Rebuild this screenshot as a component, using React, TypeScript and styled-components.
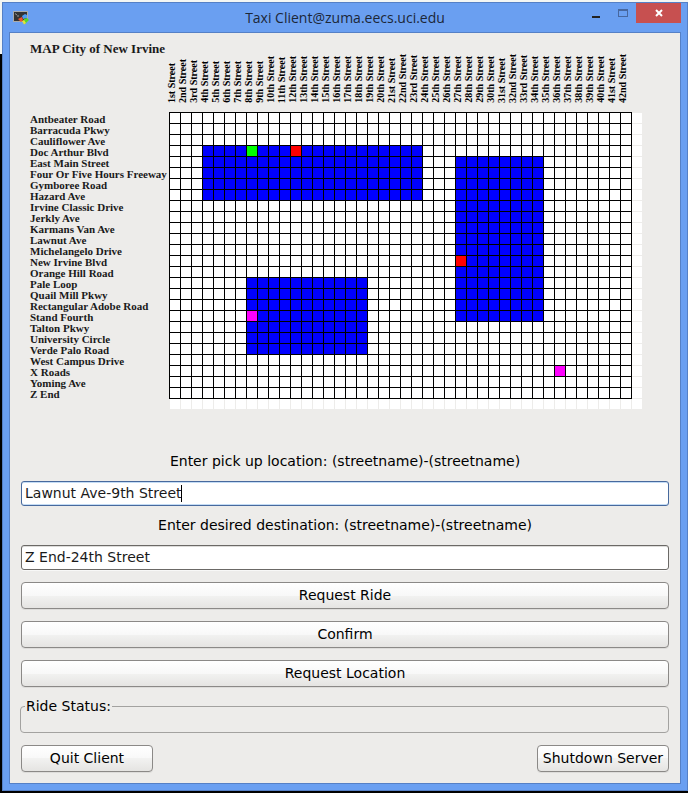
import React, { useLayoutEffect, useRef, useState } from "react";
import styled, { createGlobalStyle } from "styled-components";

const STREETS = [
  "Antbeater Road", "Barracuda Pkwy", "Cauliflower Ave", "Doc Arthur Blvd",
  "East Main Street", "Four Or Five Hours Freeway", "Gymboree Road", "Hazard Ave",
  "Irvine Classic Drive", "Jerkly Ave", "Karmans Van Ave", "Lawnut Ave",
  "Michelangelo Drive", "New Irvine Blvd", "Orange Hill Road", "Pale Loop",
  "Quail Mill Pkwy", "Rectangular Adobe Road", "Stand Fourth", "Talton Pkwy",
  "University Circle", "Verde Palo Road", "West Campus Drive", "X Roads",
  "Yoming Ave", "Z End",
];

const ordinal = (n: number) => {
  const teen = n > 10 && n < 14;
  const suffix = teen ? "th" : ["th", "st", "nd", "rd"][n % 10] ?? "th";
  return `${n}${suffix}`;
};

const CROSS_STREETS = Array.from({ length: 42 }, (_, i) => `${ordinal(i + 1)} Street`);

const CELL = 11;
const COLS = CROSS_STREETS.length;
const ROWS = STREETS.length;

type Block = { col: number; row: number; cols: number; rows: number };
type Marker = { col: number; row: number; color: string };

const BLOCKS: Block[] = [
  { col: 3, row: 3, cols: 20, rows: 5 },
  { col: 26, row: 4, cols: 8, rows: 15 },
  { col: 7, row: 15, cols: 11, rows: 7 },
];

const MARKERS: Marker[] = [
  { col: 7, row: 3, color: "#00ff00" },
  { col: 11, row: 3, color: "#ff0000" },
  { col: 26, row: 13, color: "#ff0000" },
  { col: 7, row: 18, color: "#ff00ff" },
  { col: 35, row: 23, color: "#ff00ff" },
];

const GlobalStyle = createGlobalStyle`
  * { box-sizing: border-box; }
  body { margin: 0; background: #000; }
  button, input { font: inherit; color: inherit; }
`;

const Desktop = styled.div`
  min-height: 100vh;
  display: flex;
  padding: 2px 0 2px 2px;
  background: linear-gradient(#f4f6f4 54px, #000 54px);
`;

const Window = styled.main`
  flex: 1;
  display: flex;
  flex-direction: column;
  padding: 0 6px 6px;
  border: 1px solid #5580c6;
  background: #6a9ff1;
`;

const TitleBar = styled.header`
  height: 29px;
  display: grid;
  grid-template-columns: 112px 1fr 112px;
  align-items: start;
`;

const AppIcon = styled.svg`
  width: 16px;
  height: 14px;
  margin: 8px 0 0 4px;
`;

const Title = styled.h1`
  margin: 0;
  text-align: center;
  font: 400 14px/30px "Open Sans", "Noto Sans", sans-serif;
  color: #1c2738;
`;

const WindowControls = styled.div`
  display: flex;
  justify-content: flex-end;
`;

const ControlButton = styled.button<{ $close?: boolean }>`
  width: ${(p) => (p.$close ? 45 : 27)}px;
  height: 20px;
  padding: 0;
  border: 0;
  display: grid;
  place-items: center;
  background: ${(p) => (p.$close ? "#c75050" : "transparent")};
`;

const Client = styled.div`
  flex: 1;
  display: flex;
  flex-direction: column;
  padding: 7px 11px 10px 11px;
  border: 1px solid #5580c6;
  background: #edecea;
  font: 400 14px/18px "DejaVu Sans", sans-serif;
  color: #000;
`;

const MapPanel = styled.section`
  display: grid;
  grid-template-columns: 139px 1fr;
  margin-left: 9px;
  margin-bottom: 43px;
  font: 700 11px/11px "Liberation Serif", serif;
  color: #1a1a1a;
`;

const MapTitle = styled.h2`
  margin: 0;
  font-size: 13px;
  line-height: 18px;
  white-space: nowrap;
`;

const CrossStreetList = styled.ul`
  height: 72px;
  margin: 0 0 0 -3px;
  padding: 0 0 9px;
  display: flex;
  align-items: flex-end;
  list-style: none;
  font-size: 10px;
  color: #000;
`;

const CrossStreet = styled.li`
  width: 11px;
  writing-mode: vertical-rl;
  transform: rotate(180deg);
  line-height: 11px;
  white-space: nowrap;
`;

const StreetList = styled.ul`
  margin: 0;
  padding: 2px 0 0;
  list-style: none;
  white-space: nowrap;
`;

const MapDrawing = styled.svg`
  display: block;
`;

const Form = styled.form`
  flex: 1;
  display: flex;
  flex-direction: column;
`;

const FieldLabel = styled.label`
  margin-bottom: 11px;
  text-align: center;
`;

const FieldBox = styled.div`
  position: relative;
  display: flex;
  margin-bottom: 10px;
`;

const TextField = styled.input`
  flex: 1;
  min-width: 0;
  height: 25px;
  padding: 0 3px 2px;
  border: 1px solid #6b6966;
  border-radius: 3px;
  outline: 0;
  background: #fff;
  box-shadow: inset 0 1px #dddcda, 0 1px #f8f8f7;
  color: #1a1a1a;
  caret-color: transparent;

  &:focus {
    border-color: #47699d;
    box-shadow: inset 0 1px #c4dcf5, inset 0 -1px #c4dcf5;
  }
`;

const Caret = styled.span`
  position: absolute;
  top: 4px;
  width: 1px;
  height: 17px;
  background: #000;
  pointer-events: none;
  visibility: hidden;

  input:focus + & {
    visibility: visible;
  }
`;

const Actions = styled.div`
  display: grid;
  gap: 12px;
  margin-top: 2px;
`;

const PushButton = styled.button`
  min-width: 132px;
  height: 27px;
  padding: 0 4px 2px;
  border: 1px solid #8b8987;
  border-radius: 4px;
  background: linear-gradient(#fff, #f8f8f8 50%, #f2f2f1 50%, #e5e4e2);
  box-shadow: 0 1px #dddcda;
  white-space: nowrap;
`;

const StatusGroup = styled.fieldset`
  height: 35px;
  margin: 10px 0 12px -1px;
  padding: 0 4px;
  border: 1px solid #a3a2a0;
  border-radius: 4px;
  min-width: 0;
  height: 36px;
`;

const StatusLegend = styled.legend`
  padding: 0 1px;
`;

const Footer = styled.footer`
  display: flex;
  justify-content: space-between;
`;

function CityMap() {
  const width = COLS * CELL;
  const height = ROWS * CELL;
  return (
    <MapDrawing
      width={width + CELL}
      height={height + CELL}
      shapeRendering="crispEdges"
      role="img"
      aria-label="City grid"
    >
      <rect x="1" y="1" width={width + 10} height={height + 10} fill="#fff" />
      {Array.from({ length: COLS + 1 }, (_, i) => (
        <rect key={i} x={i * CELL} y="0" width="1" height={height + CELL} fill="#edecea" />
      ))}
      {Array.from({ length: ROWS + 1 }, (_, i) => (
        <rect key={i} x="0" y={i * CELL} width={width + CELL} height="1" fill="#edecea" />
      ))}
      {BLOCKS.map((b) => (
        <rect
          key={`${b.col}-${b.row}`}
          x={b.col * CELL}
          y={b.row * CELL}
          width={b.cols * CELL}
          height={b.rows * CELL}
          fill="#0000ff"
        />
      ))}
      {Array.from({ length: COLS + 1 }, (_, i) => (
        <rect key={i} x={i * CELL} y="0" width="1" height={height + 1} fill="#000" />
      ))}
      {Array.from({ length: ROWS + 1 }, (_, i) => (
        <rect key={i} x="0" y={i * CELL} width={width + 1} height="1" fill="#000" />
      ))}
      {MARKERS.map((m) => (
        <rect
          key={`${m.col}-${m.row}`}
          x={m.col * CELL + 1}
          y={m.row * CELL + 1}
          width="10"
          height="10"
          fill={m.color}
        />
      ))}
    </MapDrawing>
  );
}

type FieldProps = {
  id: string;
  value: string;
  onChange: (value: string) => void;
  autoFocus?: boolean;
};

function Field({ id, value, onChange, autoFocus }: FieldProps) {
  const input = useRef<HTMLInputElement>(null);
  const [cursor, setCursor] = useState(value.length);
  const [caretLeft, setCaretLeft] = useState(4);

  useLayoutEffect(() => {
    const el = input.current;
    const ctx = document.createElement("canvas").getContext("2d");
    if (!el || !ctx) return;
    const style = getComputedStyle(el);
    ctx.font = `${style.fontSize} ${style.fontFamily}`;
    const textWidth = ctx.measureText(value.slice(0, cursor)).width;
    setCaretLeft(Math.round(4 + textWidth - el.scrollLeft));
  }, [value, cursor]);

  return (
    <FieldBox>
      <TextField
        ref={input}
        id={id}
        value={value}
        autoFocus={autoFocus}
        onFocus={(e) => e.target.setSelectionRange(cursor, cursor)}
        onChange={(e) => {
          onChange(e.target.value);
          setCursor(e.target.selectionStart ?? e.target.value.length);
        }}
        onKeyUp={(e) => setCursor(e.currentTarget.selectionStart ?? 0)}
        onClick={(e) => setCursor(e.currentTarget.selectionStart ?? 0)}
      />
      <Caret style={{ left: caretLeft }} />
    </FieldBox>
  );
}

export default function App() {
  const [pickup, setPickup] = useState("Lawnut Ave-9th Street");
  const [destination, setDestination] = useState("Z End-24th Street");

  return (
    <>
      <GlobalStyle />
      <Desktop>
        <Window>
          <TitleBar>
            <AppIcon viewBox="0 0 16 14" aria-hidden="true">
              <rect x="0.5" y="0.5" width="14" height="10" fill="#333" stroke="#aaa" />
              <path d="M2 2.5l2 1.500M4 5h2" stroke="#999" />
              <path d="M9 5l3-2 2 1v3l-4 1z" fill="#4c9bf0" />
              <path d="M5 8l4-2 1 3-2 2z" fill="#f0522c" />
              <path d="M11 8l3-1 2 2-4 4-2-2z" fill="#56d62c" />
              <path d="M9 10l2-1 2 3-2 1.500z" fill="#e6e23a" />
            </AppIcon>
            <Title>Taxi Client@zuma.eecs.uci.edu</Title>
            <WindowControls>
              <ControlButton type="button" aria-label="Minimize">
                <svg width="8" height="10"><rect y="8" width="8" height="2" fill="#222" /></svg>
              </ControlButton>
              <ControlButton type="button" aria-label="Maximize">
                <svg width="10" height="8" shapeRendering="crispEdges">
                  <path d="M0 0h10v8H0zM1 2v5h8V2z" fill="#47679f" fillRule="evenodd" />
                </svg>
              </ControlButton>
              <ControlButton type="button" $close aria-label="Close">
                <svg width="8" height="8"><path d="M1 1l6 6M7 1L1 7" stroke="#fff" strokeWidth="2" /></svg>
              </ControlButton>
            </WindowControls>
          </TitleBar>
          <Client>
            <MapPanel>
              <MapTitle>MAP City of New Irvine</MapTitle>
              <CrossStreetList>
                {CROSS_STREETS.map((name) => <CrossStreet key={name}>{name}</CrossStreet>)}
              </CrossStreetList>
              <StreetList>
                {STREETS.map((name) => <li key={name}>{name}</li>)}
              </StreetList>
              <CityMap />
            </MapPanel>
            <Form onSubmit={(e) => e.preventDefault()}>
              <FieldLabel htmlFor="pickup">Enter pick up location: (streetname)-(streetname)</FieldLabel>
              <Field id="pickup" autoFocus value={pickup} onChange={setPickup} />
              <FieldLabel htmlFor="destination">Enter desired destination: (streetname)-(streetname)</FieldLabel>
              <Field id="destination" value={destination} onChange={setDestination} />
              <Actions>
                <PushButton type="submit">Request Ride</PushButton>
                <PushButton type="button">Confirm</PushButton>
                <PushButton type="button">Request Location</PushButton>
              </Actions>
              <StatusGroup>
                <StatusLegend>Ride Status:</StatusLegend>
              </StatusGroup>
              <Footer>
                <PushButton type="button">Quit Client</PushButton>
                <PushButton type="button">Shutdown Server</PushButton>
              </Footer>
            </Form>
          </Client>
        </Window>
      </Desktop>
    </>
  );
}
